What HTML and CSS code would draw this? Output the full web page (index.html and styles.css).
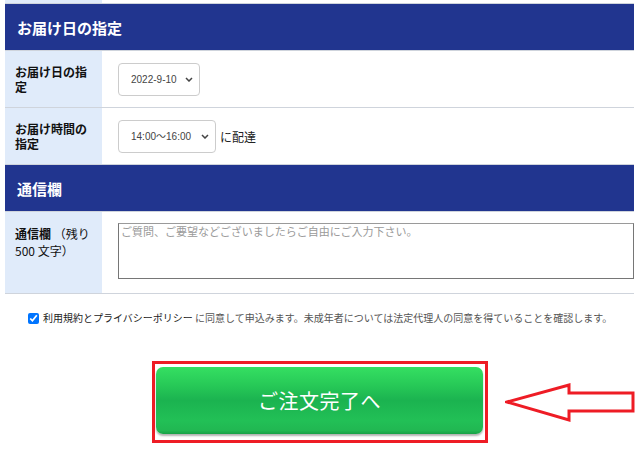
FILE: index.html
```html
<!DOCTYPE html>
<html lang="ja">
<head>
    <meta charset="UTF-8">
    <meta name="viewport" content="width=device-width, initial-scale=1.0">
    <title>ご注文内容の確認</title>
    <link rel="stylesheet" href="styles.css">
</head>
<body>
    <div class="order-form">
        <div class="form-table">
            <div class="row row-cut">
                <div class="label"></div>
                <div class="value"></div>
            </div>

            <div class="section-head">お届け日の指定</div>
            <div class="row">
                <div class="label">お届け日の指定</div>
                <div class="value">
                    <span class="select-wrap">
                        <select class="select-date" name="delivery_date">
                            <option>2022-9-10</option>
                            <option>2022-9-11</option>
                            <option>2022-9-12</option>
                        </select>
                        <svg class="chevron" width="8" height="5" viewBox="0 0 8 5"><path d="M1 1l3 3 3-3" fill="none" stroke="#444" stroke-width="1.5"/></svg>
                    </span>
                </div>
            </div>
            <div class="row">
                <div class="label">お届け時間の指定</div>
                <div class="value">
                    <span class="select-wrap">
                        <select class="select-time" name="delivery_time">
                            <option>14:00〜16:00</option>
                            <option>16:00〜18:00</option>
                            <option>18:00〜20:00</option>
                        </select>
                        <svg class="chevron" width="8" height="5" viewBox="0 0 8 5"><path d="M1 1l3 3 3-3" fill="none" stroke="#444" stroke-width="1.5"/></svg>
                    </span>
                    <span class="suffix">に配達</span>
                </div>
            </div>

            <div class="section-head">通信欄</div>
            <div class="row row-message">
                <div class="label"><b>通信欄</b> （残り<br>500 文字）</div>
                <div class="value">
                    <textarea name="message" placeholder="ご質問、ご要望などございましたらご自由にご入力下さい。"></textarea>
                </div>
            </div>
        </div>

        <p class="agree">
            <input type="checkbox" id="agree" checked>
            <label for="agree"><span class="link">利用規約とプライバシーポリシー</span> に同意して申込みます。未成年者については法定代理人の同意を得ていることを確認します。</label>
        </p>

        <div class="submit-area">
            <div class="submit-frame">
                <button type="submit" class="submit-btn">ご注文完了へ</button>
            </div>
            <svg class="arrow" width="131" height="41" viewBox="0 0 131 41">
                <polygon points="2,20 64,3 64,11 128,11 128,29 64,29 64,38" fill="none" stroke="#ee1c25" stroke-width="3" stroke-linejoin="miter"/>
            </svg>
        </div>
    </div>
</body>
</html>
```

FILE: styles.css
```css
body {
    margin: 0;
    background-color: #ffffff;
    font-family: "Noto Sans CJK JP", "Liberation Sans", sans-serif;
    color: #333;
}
.order-form {
    width: 640px;
}
.form-table {
    margin-left: 5px;
    width: 629px;
}
.row {
    display: grid;
    grid-template-columns: 97px 1fr;
    height: 56px;
    border-bottom: 1px solid #cfd4dc;
}
.row-cut {
    height: 3px;
}
.row-message {
    height: 81px;
}
.label {
    background-color: #e0ebfa;
    padding: 0 6px 0 10px;
    display: flex;
    align-items: center;
    font-size: 12px;
    font-weight: bold;
    line-height: 15px;
    color: #111;
}
.row-message .label {
    display: block;
    padding-top: 13px;
    line-height: 17px;
    font-weight: normal;
}
.row-message .label b {
    font-weight: bold;
}
.value {
    display: flex;
    align-items: center;
    padding-left: 16px;
}
.row-message .value {
    align-items: flex-start;
    padding-top: 11px;
}
.section-head {
    background-color: #21358f;
    border-bottom: 1px solid #cfd4dc;
    box-sizing: border-box;
    height: 47px;
    padding-left: 12px;
    display: flex;
    align-items: center;
    font-size: 15px;
    font-weight: bold;
    color: #ffffff;
}
.select-wrap {
    position: relative;
    display: inline-block;
}
.select-wrap select {
    appearance: none;
    -webkit-appearance: none;
    height: 33px;
    padding: 0 0 0 12px;
    border: 1px solid #cccccc;
    border-radius: 4px;
    background-color: #fff;
    font-family: "Liberation Sans", "Noto Sans CJK JP", sans-serif;
    font-size: 10px;
    color: #444;
    display: block;
}
.select-date {
    width: 82px;
}
.select-time {
    width: 98px;
}
.chevron {
    position: absolute;
    right: 7px;
    top: 14px;
    pointer-events: none;
}
.suffix {
    margin-left: 4px;
    font-size: 12px;
    color: #222;
}
textarea {
    width: 100%;
    height: 56px;
    box-sizing: border-box;
    margin: 0;
    padding: 0 2px;
    border: 1px solid #767676;
    border-top-color: #9a9a9a;
    font-family: "Noto Sans CJK JP", sans-serif;
    font-size: 11px;
    line-height: 14px;
    resize: none;
}
textarea::placeholder {
    color: #9a9a9a;
}
.agree {
    margin: 17px 0 0;
    text-align: center;
    font-size: 10px;
    line-height: 14px;
    color: #555;
}
.agree input {
    width: 11px;
    height: 11px;
    margin: 0 2px 0 0;
    vertical-align: -2px;
}
.agree .link {
    color: #222;
}
.submit-area {
    display: grid;
    grid-template-columns: 1fr 336px 1fr;
    align-items: center;
    margin-top: 36px;
}
.submit-frame {
    grid-column: 2;
    border: 3px solid #ee1c25;
    padding: 3px 2px 6px 1px;
}
.submit-btn {
    display: block;
    width: 327px;
    height: 67px;
    border: none;
    border-radius: 7px;
    background: linear-gradient(to bottom, #35df62 0%, #28cb58 25%, #1bb350 50%, #22c056 80%, #21b752 95%, #17a046 100%);
    box-shadow: 0 2px 2px rgba(0, 0, 0, 0.3);
    font-family: "Noto Sans CJK JP", sans-serif;
    font-size: 20px;
    color: #ffffff;
    letter-spacing: 0.5px;
    cursor: pointer;
}
.arrow {
    margin-left: 17px;
}
```
